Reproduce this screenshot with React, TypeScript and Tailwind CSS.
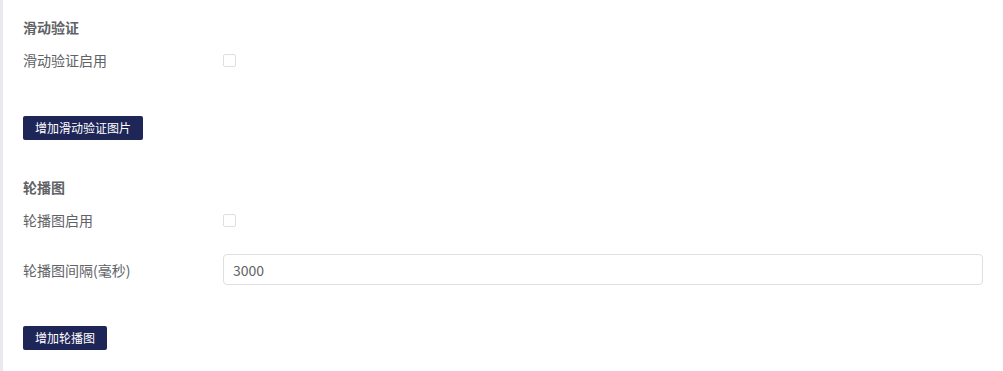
export default function App() {
  const font = { fontFamily: '"Noto Sans CJK SC", "Noto Sans", sans-serif' };

  return (
    <div className="w-[1003px] h-[371px] bg-white flex overflow-hidden" style={font}>
      <div className="w-[3px] shrink-0 bg-[#e9e9ee]" />
      <div className="flex-1 pl-[20px] pr-[20px] text-[#606266]">
        {/* 滑动验证 */}
        <div className="pt-[17px] h-[37px] leading-[20px] text-[14px] font-bold">滑动验证</div>
        <div className="mt-[13px] h-[20px] flex items-center">
          <div className="w-[200px] text-[14px] leading-[20px]">滑动验证启用</div>
          <span className="w-[13px] h-[13px] border border-[#dcdfe6] rounded-[2px] bg-white" />
        </div>
        <button className="mt-[46px] h-[24px] px-[12px] rounded-[2px] bg-[#1e2557] text-white text-[12px] leading-[24px] block">
          增加滑动验证图片
        </button>

        {/* 轮播图 */}
        <div className="mt-[37px] h-[20px] leading-[20px] text-[14px] font-bold">轮播图</div>
        <div className="mt-[13px] h-[20px] flex items-center">
          <div className="w-[200px] text-[14px] leading-[20px]">轮播图启用</div>
          <span className="w-[13px] h-[13px] border border-[#dcdfe6] rounded-[2px] bg-white" />
        </div>
        <div className="mt-[24px] h-[31px] flex items-center">
          <div className="w-[200px] text-[14px] leading-[20px]">轮播图间隔(毫秒)</div>
          <input
            defaultValue="3000"
            className="w-[760px] h-[31px] border border-[#dcdfe6] rounded-[4px] px-[9px] text-[14px] text-[#606266] outline-none"
            style={font}
          />
        </div>
        <button className="mt-[41px] h-[24px] px-[12px] rounded-[2px] bg-[#1e2557] text-white text-[12px] leading-[24px] block">
          增加轮播图
        </button>
      </div>
    </div>
  );
}
